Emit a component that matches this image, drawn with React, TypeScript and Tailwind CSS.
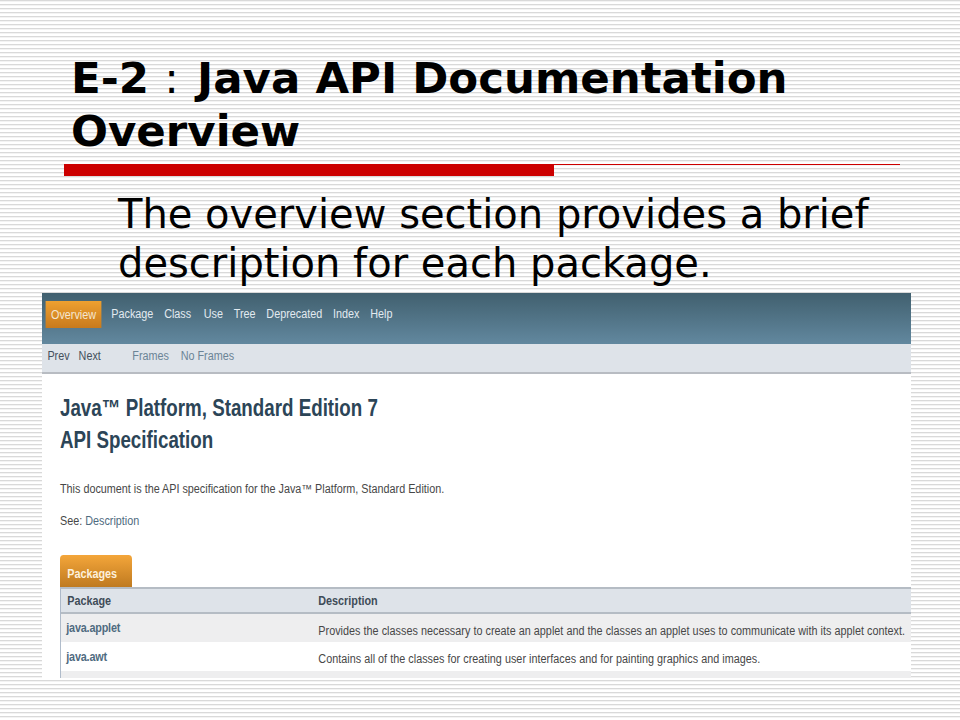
const navItems = ['Package', 'Class', 'Use', 'Tree', 'Deprecated', 'Index', 'Help'];

function ApiPage() {
  return (
    <div className="w-[869px] h-[385px] ml-[42px] mt-[5px] overflow-hidden bg-white">
      {/* the page is a squeezed screenshot, so everything inside is narrowed by 0.9 */}
      <div className="w-[966px] origin-top-left scale-x-[0.9] font-['Liberation_Sans',Arial,sans-serif] text-[12px] leading-[14px]">
        {/* Top nav */}
        <div className="h-[51px] flex items-start pl-[4px] pt-[8px] bg-gradient-to-b from-[#41606f] to-[#62889f]">
          <div className="w-[62px] h-[27px] flex items-center justify-center bg-gradient-to-b from-[#eea030] to-[#c87a1c] text-[#f5e6d0]">
            Overview
          </div>
          <div className="flex gap-[12px] ml-[11px] pt-[6px] text-[#e2eaf0]">
            {navItems.map((item, i) => (
              <span key={item} className={i === 2 ? 'ml-[2px]' : ''}>{item}</span>
            ))}
          </div>
        </div>
        {/* Sub nav */}
        <div className="h-[30px] flex items-center pl-[6px] pb-[5px] bg-[#dee3e9] border-b-2 border-[#b8bcc2]">
          <span className="text-[#44505c]">Prev</span>
          <span className="text-[#44505c] ml-[10px]">Next</span>
          <span className="text-[#6b8496] ml-[35px]">Frames</span>
          <span className="text-[#6b8496] ml-[13px]">No Frames</span>
        </div>
        {/* Title */}
        <div className="pl-[20px] pt-[18px]">
          <h1 className="text-[23px] leading-[32px] font-bold origin-left scale-x-[0.906] text-[#2c4557] whitespace-nowrap">
            Java™ Platform, Standard Edition 7
            <br />
            API Specification
          </h1>
          <p className="mt-[26px] text-[#474747]">
            This document is the API specification for the Java™ Platform, Standard Edition.
          </p>
          <p className="mt-[18px] text-[#474747]">
            See: <span className="text-[#4f6b80]">Description</span>
          </p>
        </div>
        {/* Packages table */}
        <div className="mt-[27px] ml-[20px]">
          <div className="w-[80px] h-[32px] rounded-t-[4px] bg-gradient-to-b from-[#f4a63a] to-[#bf7a20] pl-[8px] pt-[12px] font-bold text-[#fdf0dc]">
            Packages
          </div>
          <div className="border-l border-[#9eadc0]">
            <div className="h-[27px] flex items-center bg-[#dee3e9] border-y-2 border-[#b5bcc4] font-bold text-[#3f4c58]">
              <span className="w-[286px] shrink-0 pl-[7px]">Package</span>
              <span>Description</span>
            </div>
            <div className="h-[28px] flex items-center bg-[#eeeeef] text-[#474747] whitespace-nowrap">
              <span className="w-[286px] shrink-0 pl-[6px] tracking-[-0.2px] text-[#4f6b80] font-bold">java.applet</span>
              <span className="pt-[6px] tracking-[0.03px]">Provides the classes necessary to create an applet and the classes an applet uses to communicate with its applet context.</span>
            </div>
            <div className="h-[29px] flex items-center bg-white text-[#474747] whitespace-nowrap">
              <span className="w-[286px] shrink-0 pl-[6px] tracking-[-0.2px] text-[#4f6b80] font-bold">java.awt</span>
              <span className="pt-[4px] tracking-[0.03px]">Contains all of the classes for creating user interfaces and for painting graphics and images.</span>
            </div>
            <div className="h-[8px] bg-[#eeeeef]" />
          </div>
        </div>
      </div>
    </div>
  );
}

export default function App() {
  return (
    <div className="w-[960px] h-[720px] overflow-hidden bg-white bg-[repeating-linear-gradient(to_bottom,#d9d9d9_0px,#d9d9d9_1px,#f3f3f3_1px,#f3f3f3_2px,#ffffff_2px,#ffffff_4px)] font-['DejaVu_Sans',Verdana,sans-serif] text-black">
      {/* Slide title */}
      <div className="pl-[71px] pt-[52px]">
        <h1 className="text-[43.5px] leading-[53px] font-bold whitespace-nowrap">
          E-2 <span className="font-normal mr-[3px]">:</span> Java API Documentation
          <br />
          Overview
        </h1>
      </div>
      {/* Rule */}
      <div className="flex items-start ml-[64px] mt-[6px] w-[836px]">
        <div className="w-[490px] h-[12px] bg-[#cc0000]" />
        <div className="flex-1 h-[1px] bg-[#cc0000]" />
      </div>
      {/* Intro */}
      <p className="pl-[118px] pt-[14px] text-[40px] leading-[49px]">
        The overview section provides a brief
        <br />
        description for each package.
      </p>
      <ApiPage />
    </div>
  );
}
